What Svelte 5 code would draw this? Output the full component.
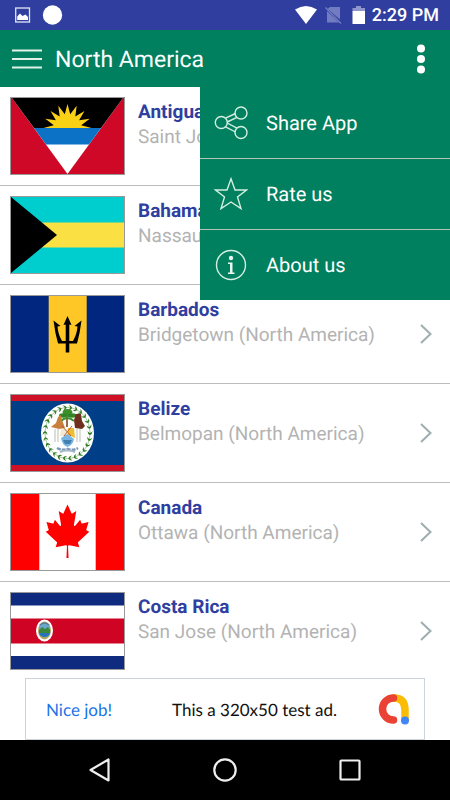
<script lang="ts">
  type Country = { name: string; capital: string; flag: string };

  const COUNTRIES: Country[] = [
    { name: "Antigua and Barbuda", capital: "Saint John's", flag: "ag" },
    { name: "Bahamas", capital: "Nassau", flag: "bs" },
    { name: "Barbados", capital: "Bridgetown", flag: "bb" },
    { name: "Belize", capital: "Belmopan", flag: "bz" },
    { name: "Canada", capital: "Ottawa", flag: "ca" },
    { name: "Costa Rica", capital: "San Jose", flag: "cr" },
  ];

  const MENU = [
    { id: "share", label: "Share App" },
    { id: "rate", label: "Rate us" },
    { id: "about", label: "About us" },
  ];

  const region = "North America";
  let menuOpen = $state(true);

  // Half sun with nine rays for Antigua
  const sun = Array.from({ length: 17 }, (_, i) => {
    const a = (i * Math.PI) / 16;
    const r = i % 2 ? 14 : 24;
    return `${(56.5 - Math.cos(a) * r).toFixed(1)},${(30 - Math.sin(a) * r).toFixed(1)}`;
  }).join(" ");

  // Leaves of the Belize garland
  const leaves = Array.from({ length: 26 }, (_, i) => {
    const a = (i * 2 * Math.PI) / 26;
    return { x: 56.5 + Math.cos(a) * 22.5, y: 38 + Math.sin(a) * 25.5, r: (a * 180) / Math.PI + 90 };
  });
</script>

{#snippet flag(code: string)}
  <svg class="flag" viewBox="0 0 113 76" preserveAspectRatio="none" aria-hidden="true">
    {#if code === "ag"}
      <rect width="113" height="76" fill="#cf0828" />
      <path d="M1 0H112L56.5 76z" fill="#fff" />
      <path d="M1 0H112L90 30H23z" fill="#000" />
      <polygon points={sun} fill="#fbd116" />
      <path d="M23 30H90L78 46.500H35z" fill="#0b72c6" />
    {:else if code === "bs"}
      <rect width="113" height="76" fill="#00cece" />
      <rect y="25.500" width="113" height="25" fill="#fae042" />
      <path d="M0 0L46 38L0 76z" fill="#000" />
    {:else if code === "bb"}
      <rect width="113" height="76" fill="#00267f" />
      <rect x="37.700" width="38" height="76" fill="#ffc726" />
      <path
        d="M56.500 20L60.500 29L58.300 28.500V45H62Q66 38 66.500 30.500L63.500 30L70.500 24.500Q69 37 66 47.500H58.300V56.500H54.700V47.500H47Q44 37 42.500 24.500L49.500 30L46.500 30.500Q47 38 51 45H54.700V28.500L52.500 29z"
        fill="#000"
      />
    {:else if code === "bz"}
      <rect width="113" height="76" fill="#003f87" />
      <rect width="113" height="6" fill="#ce1126" />
      <rect y="70" width="113" height="6" fill="#ce1126" />
      <ellipse cx="56.500" cy="38" rx="26.500" ry="29.500" fill="#fff" />
      <ellipse cx="56.500" cy="38" rx="22.500" ry="25.500" fill="none" stroke="#6c9c5c" stroke-width=".6" />
      {#each leaves as l, i (i)}
        <path
          d="M-2 -2.500Q1 -2.500 2 0Q1 2.500 -2 2.500Q0 1 0 0Q0 -1 -2 -2.500z"
          transform="translate({l.x} {l.y}) rotate({l.r})"
          fill="#2f7d22"
        />
      {/each}
      <path d="M56 19V32" stroke="#7a4a1c" stroke-width="1.600" />
      <ellipse cx="56.500" cy="17" rx="5" ry="3" fill="#3b8f2b" />
      <ellipse cx="52" cy="20.500" rx="4" ry="2.200" fill="#2f8424" />
      <ellipse cx="61" cy="20.500" rx="4.500" ry="2.200" fill="#2f8424" />
      <path d="M50 26Q56 20 63 26" stroke="#3b8f2b" stroke-width="2" fill="none" />
      <path d="M40 32L45 28L47 22L50 20L51 25L54 33L48 34z" fill="#c9803b" />
      <path d="M63 25L65 19L70 19L71 26L74 31L71 34L64 33z" fill="#6e2f1c" />
      <path d="M44 34V47M47 34V47M66 34V47M69 34V47" stroke="#dcdeda" stroke-width="2" />
      <path d="M50 34H56.500V41H49z" fill="#f2e9d2" />
      <path d="M57 33H63L64 43L57 40z" fill="#f0bd32" />
      <path d="M50 43L56.500 39L63 44Q62 50 56.500 52Q51 50 50 43z" fill="#77b5e3" />
      <path d="M52 45H61L59 49H54z" fill="#4380af" />
      <path d="M51 31L60 41M61 31L53 41" stroke="#b64b2a" stroke-width=".9" />
      <path d="M46 53Q51 56 56.500 54Q62 56 67 53" fill="none" stroke="#7b98b7" stroke-width="2.600" stroke-dasharray="4 1" />
      <path d="M49 57Q56 54 64 57" fill="none" stroke="#a5b8c9" stroke-width="2" />
    {:else if code === "ca"}
      <rect width="113" height="76" fill="#fff" />
      <path d="M0 0H28.300V76H0zM84.700 0H113V76H84.700z" fill="#f00" />
      <path
        transform="translate(56.5 37) scale(.0117 .0133)"
        d="m-90 2030 45-863a95 95 0 0 0-111-98l-859 151 116-320a65 65 0 0 0-20-73l-941-762 212-99a65 65 0 0 0 34-79l-186-572 542 115a65 65 0 0 0 73-38l105-247 423 454a65 65 0 0 0 111-57l-204-1052 327 189a65 65 0 0 0 91-27l332-652 332 652a65 65 0 0 0 91 27l327-189-204 1052a65 65 0 0 0 111 57l423-454 105 247a65 65 0 0 0 73 38l542-115-186 572a65 65 0 0 0 34 79l212 99-941 762a65 65 0 0 0-20 73l116 320-859-151a95 95 0 0 0-111 98l45 863z"
        fill="#f00"
      />
    {:else}
      <rect width="113" height="76" fill="#0f2b7f" />
      <rect y="12.500" width="113" height="50.500" fill="#fff" />
      <rect y="25.500" width="113" height="25" fill="#cf0424" />
      <ellipse cx="33.500" cy="37.500" rx="8.500" ry="11" fill="#fff" />
      <ellipse cx="33.500" cy="37.500" rx="6.500" ry="9" fill="#b2a667" />
      <ellipse cx="33.500" cy="35" rx="5.500" ry="5" fill="#69a9d0" />
      <path d="M28 37L31 34L34 36L37 34L39 37V40H28z" fill="#3d873c" />
      <path d="M28 40H39Q38 44 33.500 44Q29 44 28 40z" fill="#2772bb" />
      <path d="M29 32Q33.500 28 38 32" stroke="#5c7a8e" stroke-width="1.200" fill="none" />
    {/if}
  </svg>
{/snippet}

{#snippet menuIcon(id: string)}
  <svg class="menu-icon" viewBox="0 0 34 34" aria-hidden="true">
    {#if id === "share"}
      <circle cx="7.300" cy="16.500" r="6" />
      <circle cx="27" cy="7" r="6" />
      <circle cx="27" cy="26.500" r="6" />
      <path d="M11.500 12.200L21.500 7.500M13.200 16L23 11.300M13.200 17L23 22.200M11.500 20.800L21.500 26" />
    {:else if id === "rate"}
      <path d="M17 1.800L21 13H32.500L23.500 20L27 31.500L17 25L7 31.500L10.500 20L1.500 13H13z" />
    {:else}
      <circle cx="17" cy="17" r="14.500" />
      <circle cx="17" cy="10" r="2.200" class="solid" />
      <path d="M14 14.500H18.500V24.500H20.500V26H14V24.500H16V16H14z" class="solid" />
    {/if}
  </svg>
{/snippet}

<div class="screen">
  <div class="status">
    <svg class="notices" viewBox="0 0 50 22" aria-hidden="true">
      <rect x=".700" y="4" width="13.800" height="14" fill="none" stroke="#e3e6f6" stroke-width="1.300" />
      <path d="M2.200 16V12.500L5 9.500L7.500 12L10.500 10.500L13 13V16z" fill="#fff" />
      <circle cx="37.500" cy="11" r="9.700" fill="#fff" />
    </svg>
    <svg class="signals" viewBox="0 0 72 22" aria-hidden="true">
      <path d="M0 5.500Q11 -1.500 22 5.500L11 20z" fill="#fff" />
      <path d="M35 3H45V15.500L32.500 4.800zM32 7L44 18.500H32z" fill="#727cc0" />
      <path d="M30.500 3.500L46 19.500" stroke="#727cc0" stroke-width="1.300" />
      <path d="M61 2H66V4H70V7H57.500V4H61z" fill="#8f96cd" />
      <rect x="57.500" y="7" width="12.500" height="13" fill="#fff" />
    </svg>
    <time>2:29 PM</time>
  </div>

  <header>
    <button class="nav" aria-label="Open navigation">
      <svg viewBox="0 0 30 22" width="30" height="22" aria-hidden="true">
        <path d="M0 2.500H30M0 11H30M0 19.500H30" stroke="#e0f2e8" stroke-width="2" />
      </svg>
    </button>
    <h1>{region}</h1>
    <button class="more" aria-label="More options" onclick={() => (menuOpen = !menuOpen)}>
      <svg viewBox="0 0 8 30" width="8" height="30" aria-hidden="true">
        <circle cx="4" cy="4.500" r="4" />
        <circle cx="4" cy="15" r="4" />
        <circle cx="4" cy="25.500" r="4" />
      </svg>
    </button>
    {#if menuOpen}
      <div class="menu">
        {#each MENU as m (m.id)}
          <button class="menu-item">
            {@render menuIcon(m.id)}
            <span>{m.label}</span>
          </button>
        {/each}
      </div>
    {/if}
  </header>

  <ul class="list">
    {#each COUNTRIES as c (c.name)}
      <li>
        <button class="row">
          {@render flag(c.flag)}
          <span class="text">
            <span class="name">{c.name}</span>
            <span class="capital">{c.capital} ({region})</span>
          </span>
          <svg class="chevron" viewBox="0 0 12 20" aria-hidden="true">
            <path d="M1 1L10.500 10L1 19" />
          </svg>
        </button>
      </li>
    {/each}
  </ul>

  <div class="ad">
    <a href="#ad">Nice job!</a>
    <span>This a 320x50 test ad.</span>
    <svg viewBox="0 0 32 32" aria-hidden="true">
      <path d="M16 5Q27 5 27 17V27" stroke="#fbbc04" />
      <path d="M15.500 5A11 11 0 0 0 15.500 27" stroke="#ea4335" />
      <circle cx="27" cy="27.500" r="4" fill="#4285f4" />
    </svg>
  </div>

  <nav class="system">
    <button aria-label="Back">
      <svg viewBox="0 0 24 24" aria-hidden="true"><path d="M20.500 1.500V22.500L2.500 12z" /></svg>
    </button>
    <button aria-label="Home">
      <svg viewBox="0 0 24 24" aria-hidden="true"><circle cx="12" cy="12" r="10.700" /></svg>
    </button>
    <button aria-label="Recent apps">
      <svg viewBox="0 0 24 24" aria-hidden="true"><rect x="2.500" y="2.500" width="19" height="19" rx=".8" /></svg>
    </button>
  </nav>
</div>

<style>
  :global(body) {
    margin: 0;
    background: #fff;
  }
  .screen {
    display: flex;
    flex-direction: column;
    height: 100vh;
    overflow: hidden;
    font-family: Roboto, sans-serif;
    text-rendering: geometricPrecision;
  }
  button {
    border: 0;
    padding: 0;
    background: none;
    color: inherit;
    font: inherit;
    text-align: left;
    text-rendering: inherit;
    cursor: pointer;
  }
  svg {
    display: block;
    flex: none;
  }
  .status {
    display: flex;
    align-items: center;
    flex: none;
    height: 30px;
    padding: 0 11px 0 15px;
    background: #303f9f;
    color: #fff;
    font-size: 18px;
    font-weight: 500;
  }
  .notices {
    width: 50px;
    height: 22px;
    margin-right: auto;
  }
  .signals {
    width: 72px;
    height: 22px;
    margin-right: 5px;
  }
  header {
    position: relative;
    z-index: 1;
    display: flex;
    align-items: center;
    flex: none;
    height: 57px;
    padding: 0 25px 0 12px;
    background: #00805e;
    color: #fff;
  }
  h1 {
    flex: 1;
    margin: 0 0 0 13px;
    padding-top: 2px;
    font-size: 23px;
    font-weight: 400;
  }
  .more {
    fill: #fff;
  }
  .menu {
    position: absolute;
    top: 100%;
    right: 0;
    width: 250px;
    background: #00805e;
  }
  .menu-item {
    display: flex;
    align-items: center;
    gap: 18px;
    width: 100%;
    height: 71px;
    padding: 0 14px;
    font-size: 20px;
  }
  .menu-item + .menu-item {
    border-top: 1px solid #b4c4b8;
  }
  .menu-icon {
    width: 34px;
    height: 34px;
    fill: none;
    stroke: #d4eee2;
    stroke-width: 1.4;
  }
  .solid {
    fill: #e8f6f0;
    stroke: none;
  }
  .list {
    flex: 1;
    min-height: 0;
    margin: 0;
    padding: 0;
    overflow: hidden;
    list-style: none;
  }
  li {
    border-bottom: 1px solid #bcbcbc;
  }
  .row {
    display: flex;
    align-items: center;
    width: 100%;
    padding: 10px 18px 10px 10px;
  }
  .flag {
    box-sizing: border-box;
    width: 115px;
    height: 78px;
    border: 1px solid #999;
  }
  .text {
    display: flex;
    flex: 1;
    flex-direction: column;
    align-self: flex-start;
    min-width: 0;
    margin-left: 13px;
    padding-top: 2px;
    line-height: 25px;
    white-space: nowrap;
  }
  .name {
    color: #303f9f;
    font-size: 19px;
    font-weight: 700;
  }
  .capital {
    color: #b3b3b3;
    font-size: 19px;
  }
  .chevron {
    width: 12px;
    height: 20px;
    fill: none;
    stroke: #9eaeae;
    stroke-width: 2;
  }
  .ad {
    display: flex;
    align-items: center;
    flex: none;
    box-sizing: border-box;
    height: 62px;
    margin: 0 25px;
    padding: 0 14px 0 20px;
    border: 1px solid #ccd5dc;
    color: #111;
    font-family: Lato, sans-serif;
    font-size: 17px;
  }
  .ad a {
    color: #1a73e8;
    text-decoration: none;
  }
  .ad span {
    flex: 1;
    margin-left: 60px;
  }
  .ad svg {
    width: 32px;
    height: 32px;
    fill: none;
    stroke-width: 7.5;
    stroke-linecap: round;
  }
  .system {
    display: flex;
    align-items: center;
    justify-content: center;
    gap: 101px;
    flex: none;
    height: 60px;
    background: #000;
  }
  .system svg {
    width: 24px;
    height: 24px;
    fill: none;
    stroke: #eee;
    stroke-width: 2.2;
    stroke-linejoin: round;
  }
</style>
